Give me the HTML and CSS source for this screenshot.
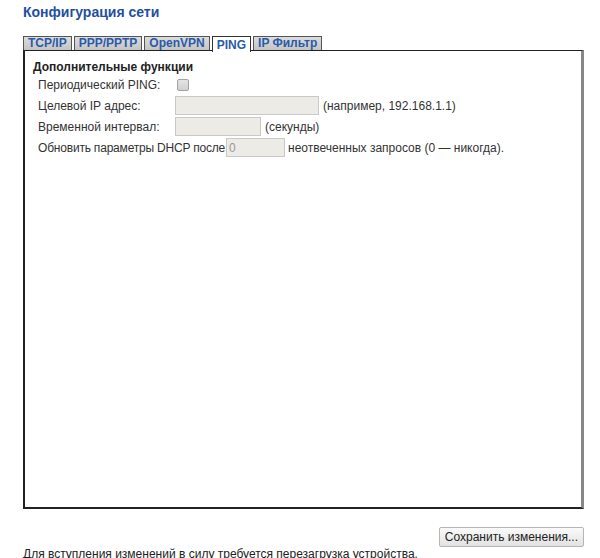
FILE: index.html
```html
<!DOCTYPE html>
<html lang="ru">
<head>
    <meta charset="UTF-8">
    <title>Конфигурация сети</title>
    <link rel="stylesheet" href="styles.css">
</head>
<body>
    <h1 class="page-title">Конфигурация сети</h1>
    <div class="tabs">
        <a class="tab">TCP/IP</a>
        <a class="tab">PPP/PPTP</a>
        <a class="tab">OpenVPN</a>
        <a class="tab active">PING</a>
        <a class="tab">IP Фильтр</a>
    </div>
    <div class="panel">
        <div class="section-title">Дополнительные функции</div>
        <div class="row">
            <span class="label">Периодический PING:</span>
            <input type="checkbox" class="check" disabled>
        </div>
        <div class="row">
            <span class="label">Целевой IP адрес:</span>
            <input type="text" class="field wide" disabled>
            <span class="hint">(например, 192.168.1.1)</span>
        </div>
        <div class="row">
            <span class="label">Временной интервал:</span>
            <input type="text" class="field short" disabled>
            <span class="hint">(секунды)</span>
        </div>
        <div class="row">
            <span class="dhcp-label">Обновить параметры DHCP после</span>
            <input type="text" class="field tiny" value="0" disabled>
            <span class="hint">неотвеченных запросов (0 — никогда).</span>
        </div>
    </div>
    <div class="actions">
        <button class="save-btn">Сохранить изменения...</button>
    </div>
    <p class="note">Для вступления изменений в силу требуется перезагрузка устройства.</p>
</body>
</html>
```

FILE: styles.css
```css
body {
    margin: 0;
    padding: 0 16px 0 23px;
    font-family: "Liberation Sans", Arial, sans-serif;
    font-size: 12px;
    color: #333;
    background: #fff;
}
.page-title {
    margin: 0;
    padding-top: 5px;
    font-size: 14px;
    font-weight: bold;
    color: #1f4fa0;
    height: 31px;
    line-height: 15px;
}
.tabs {
    display: flex;
    align-items: flex-end;
    gap: 2px;
    height: 14px;
}
.tab {
    display: block;
    height: 13px;
    line-height: 13px;
    padding: 0 4px;
    border: 1px solid #555;
    border-bottom: none;
    background: linear-gradient(#dcdcdc, #c4c4c4);
    color: #2a5aa8;
    font-weight: bold;
    font-size: 12px;
}
.tab.active {
    background: #fff;
    height: 15px;
    line-height: 16px;
    margin-bottom: -2px;
    position: relative;
    z-index: 1;
    border-color: #333;
}
.panel {
    border: 2px solid #222;
    border-right: 3px solid #888;
    border-top-width: 1px;
    height: 459px;
    padding: 10px 8px;
    box-sizing: border-box;
}
.section-title {
    font-weight: bold;
    color: #222;
    line-height: 13px;
}
.row {
    display: flex;
    align-items: center;
    height: 21px;
    padding-left: 5px;
}
.label {
    width: 139px;
}
.dhcp-label {
    letter-spacing: -0.2px;
}
.check {
    appearance: none;
    margin: 0;
    width: 12px;
    height: 12px;
    border: 1px solid #a3a3a3;
    border-radius: 2px;
    background: linear-gradient(#e4e4e4, #d0d0d0);
}
.field {
    box-sizing: border-box;
    height: 19px;
    border: 1px solid #c9c9c9;
    background: #ecebe6;
    font-family: "Liberation Sans", Arial, sans-serif;
    font-size: 12px;
    color: #999;
    padding: 0 2px;
    margin: 0 4px 0 -2px;
}
.field.wide {
    width: 144px;
}
.field.short {
    width: 86px;
}
.field.tiny {
    width: 59px;
    margin-left: 1px;
    margin-right: 3px;
}
.actions {
    display: flex;
    justify-content: flex-end;
    margin-top: 18px;
}
.save-btn {
    height: 20px;
    padding: 0 5px;
    border: 1px solid #b5b5b5;
    border-radius: 2px;
    background: linear-gradient(#fafafa, #e2e2e2);
    font-family: "Liberation Sans", Arial, sans-serif;
    font-size: 12px;
    color: #222;
}
.note {
    margin: 0;
    line-height: 14px;
    color: #222;
}
```
